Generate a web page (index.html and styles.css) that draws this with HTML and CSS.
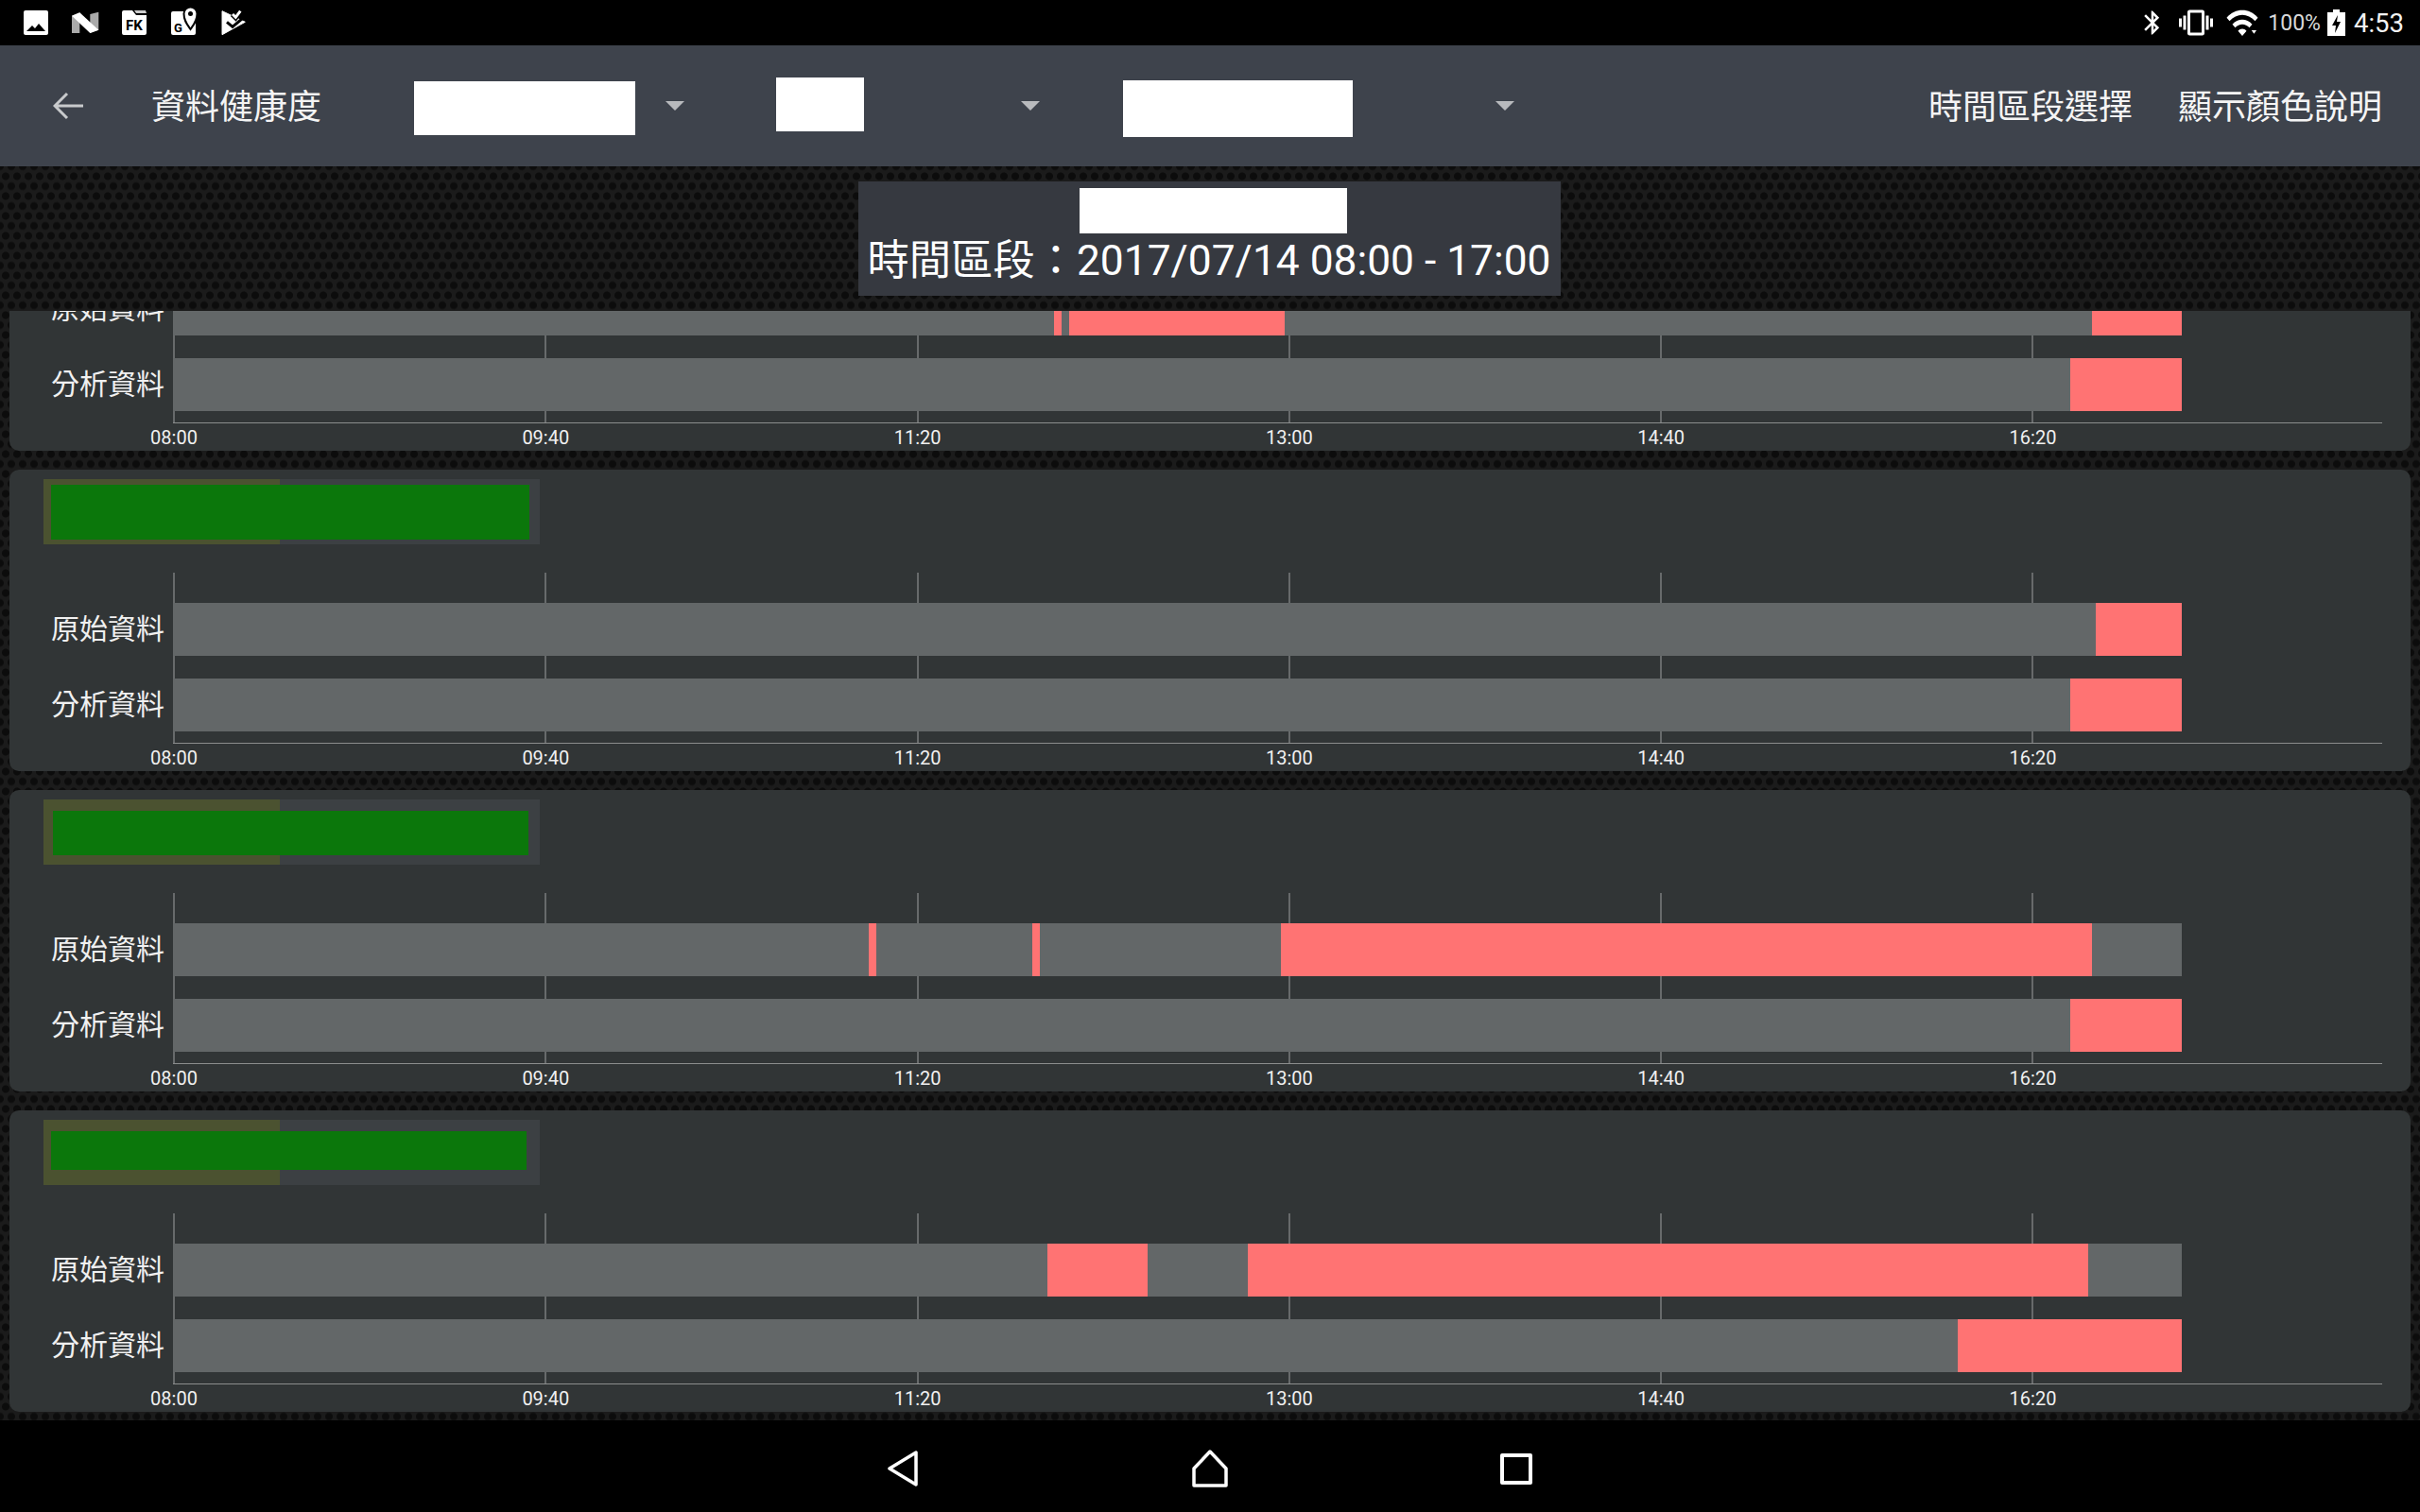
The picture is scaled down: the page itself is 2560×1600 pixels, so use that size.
FILE: index.html
```html
<!DOCTYPE html>
<html lang="zh-Hant">
<head>
    <meta charset="UTF-8">
    <title>資料健康度</title>
    <link rel="stylesheet" href="styles.css">
</head>
<body>
    <!-- Android status bar -->
    <div class="statusbar">
        <div class="status-left">
            <svg class="status-icon" viewBox="0 0 26 30"><rect x="0" y="4" width="26" height="26" rx="2" fill="#fff"/><path d="M3 26l6-6 3 3 4-5 7 8z" fill="#000"/></svg>
            <svg class="status-icon" viewBox="0 0 26 30"><path d="M-1 9.7L7.3 6.3V28H-1z" fill="#aaa"/><path d="M18.3 8l9-2.3v19L18.3 28z" fill="#aaa"/><path d="M-1 9.7L7.3 6.3l20 18.4-9 3.3z" fill="#fff"/></svg>
            <svg class="status-icon" viewBox="0 0 26 30"><path d="M2 4h9l4 5h11v19a2 2 0 0 1-2 2H2a2 2 0 0 1-2-2V6a2 2 0 0 1 2-2z" fill="#fff"/><path d="M13 4h12l1 3H15z" fill="#ccc"/><text class="icon-text" x="4" y="25" font-size="15">FK</text></svg>
            <svg class="status-icon" viewBox="0 0 26 30"><path d="M2 5h22a2 2 0 0 1 2 2v21a2 2 0 0 1-2 2H2a2 2 0 0 1-2-2V7a2 2 0 0 1 2-2z" fill="#fff"/><path d="M20.5 24C17 19 13.500 15 13.500 7.500a7 7 0 0 1 14 0C27.500 15 24 19 20.500 24z" fill="#fff" stroke="#000" stroke-width="2"/><circle cx="20.500" cy="7.500" r="2.500" fill="#000"/><text class="icon-text" x="3" y="27" font-size="13">G</text></svg>
            <svg class="status-icon" viewBox="0 0 26 30"><path d="M2 4.700L26.300 16.300 2 29.700z" fill="#fff" stroke="#fff" stroke-linejoin="round"/><path d="M7 16.300l6 5 10-8.300" fill="none" stroke="#000" stroke-width="3"/><path d="M13 8l3.300 3.300 5-6.600" fill="none" stroke="#000" stroke-width="6"/><path d="M13 8l3.300 3.300 5-6.600" fill="none" stroke="#fff" stroke-width="3"/></svg>
        </div>
        <div class="status-right">
            <svg class="icon-bt" viewBox="0 0 24 24"><path fill="#fff" d="M17.71 7.71L12 2h-1v7.59L6.41 5 5 6.41 10.59 12 5 17.59 6.41 19 11 14.41V22h1l5.71-5.71-4.3-4.29 4.3-4.29zM13 5.83l1.88 1.88L13 9.59V5.83zm1.88 10.46L13 18.17v-3.76l1.88 1.88z"/></svg>
            <svg class="icon-vibrate" viewBox="0 0 24 24"><path fill="#fff" d="M0 15h2V9H0v6zm3 2h2V7H3v10zm19-8v6h2V9h-2zm-3 8h2V7h-2v10zM16.500 3h-9C6.670 3 6 3.670 6 4.500v15c0 .83.67 1.500 1.500 1.500h9c.83 0 1.500-.67 1.500-1.500v-15c0-.83-.67-1.500-1.500-1.500zM16 19H8V5h8v14z"/></svg>
            <svg class="icon-wifi" viewBox="0 0 24 24" preserveAspectRatio="none"><path fill="#fff" d="M1 9l2 2c4.970-4.970 13.030-4.970 18 0l2-2C16.930 2.930 7.080 2.930 1 9zm8 8l3 3 3-3c-1.650-1.660-4.340-1.660-6 0zm-4-4l2 2c2.760-2.760 7.240-2.760 10 0l2-2C15.140 9.140 8.870 9.140 5 13z"/><path fill="#fff" d="M18.500 16.500h3.500l-1.750 2.200z"/></svg>
            <span class="battery-text">100%</span>
            <svg class="icon-battery" viewBox="0 0 19 28"><path fill="#fff" d="M6 0h7v3h6v25H0V3h6z"/><path fill="#000" d="M11 6l-6 11h4l-1 8 6-12h-4z"/></svg>
            <span class="clock">4:53</span>
        </div>
    </div>

    <!-- App bar -->
    <header class="appbar">
        <svg class="back" viewBox="0 0 32 30"><path d="M15 2L2 15l13 13M2 15h30" fill="none" stroke="#c8cacc" stroke-width="3"/></svg>
        <h1 class="title">資料健康度</h1>
        <div class="dropdown dd-one"><div class="redact"></div><span class="caret"></span></div>
        <div class="dropdown dd-two"><div class="redact"></div><span class="caret"></span></div>
        <div class="dropdown dd-three"><div class="redact"></div><span class="caret"></span></div>
        <div class="actions">
            <span>時間區段選擇</span>
            <span>顯示顏色說明</span>
        </div>
    </header>

    <main class="content">
        <div class="range-wrap">
            <div class="range-panel">
                <div class="range-name"></div>
                <div class="range-text">時間區段：2017/07/14 08:00 - 17:00</div>
            </div>
        </div>

        <div class="list">
            <!-- card 1, scrolled partly out of view -->
            <section class="card">
                <div class="card-title"><div class="mask mask-a"></div></div>
                <div class="chart">
                    <div class="labels"><div>原始資料</div><div>分析資料</div></div>
                    <div class="plot">
                        <div class="ticks"><i></i><i></i><i></i><i></i><i></i><i></i></div>
                        <div class="bar"><b class="ok" style="width:932px"></b><b class="bad" style="width:8px"></b><b class="ok" style="width:8px"></b><b class="bad" style="width:228px"></b><b class="ok" style="width:854px"></b><b class="bad" style="width:95px"></b></div>
                        <div class="bar"><b class="ok" style="width:2007px"></b><b class="bad" style="width:118px"></b></div>
                    </div>
                    <div class="times"><span>08:00</span><span>09:40</span><span>11:20</span><span>13:00</span><span>14:40</span><span>16:20</span></div>
                </div>
            </section>

            <section class="card">
                <div class="card-title"><div class="mask mask-a"></div></div>
                <div class="chart">
                    <div class="labels"><div>原始資料</div><div>分析資料</div></div>
                    <div class="plot">
                        <div class="ticks"><i></i><i></i><i></i><i></i><i></i><i></i></div>
                        <div class="bar"><b class="ok" style="width:2034px"></b><b class="bad" style="width:91px"></b></div>
                        <div class="bar"><b class="ok" style="width:2007px"></b><b class="bad" style="width:118px"></b></div>
                    </div>
                    <div class="times"><span>08:00</span><span>09:40</span><span>11:20</span><span>13:00</span><span>14:40</span><span>16:20</span></div>
                </div>
            </section>

            <section class="card">
                <div class="card-title"><div class="mask mask-b"></div></div>
                <div class="chart">
                    <div class="labels"><div>原始資料</div><div>分析資料</div></div>
                    <div class="plot">
                        <div class="ticks"><i></i><i></i><i></i><i></i><i></i><i></i></div>
                        <div class="bar"><b class="ok" style="width:736px"></b><b class="bad" style="width:8px"></b><b class="ok" style="width:165px"></b><b class="bad" style="width:8px"></b><b class="ok" style="width:255px"></b><b class="bad" style="width:858px"></b><b class="ok" style="width:95px"></b></div>
                        <div class="bar"><b class="ok" style="width:2007px"></b><b class="bad" style="width:118px"></b></div>
                    </div>
                    <div class="times"><span>08:00</span><span>09:40</span><span>11:20</span><span>13:00</span><span>14:40</span><span>16:20</span></div>
                </div>
            </section>

            <section class="card">
                <div class="card-title"><div class="mask mask-c"></div></div>
                <div class="chart">
                    <div class="labels"><div>原始資料</div><div>分析資料</div></div>
                    <div class="plot">
                        <div class="ticks"><i></i><i></i><i></i><i></i><i></i><i></i></div>
                        <div class="bar"><b class="ok" style="width:925px"></b><b class="bad" style="width:106px"></b><b class="ok" style="width:106px"></b><b class="bad" style="width:889px"></b><b class="ok" style="width:99px"></b></div>
                        <div class="bar"><b class="ok" style="width:1888px"></b><b class="bad" style="width:237px"></b></div>
                    </div>
                    <div class="times"><span>08:00</span><span>09:40</span><span>11:20</span><span>13:00</span><span>14:40</span><span>16:20</span></div>
                </div>
            </section>
        </div>
    </main>

    <!-- Android nav bar -->
    <nav class="navbar">
        <div class="nav-cell"><svg class="nav-back" viewBox="0 0 32 38"><path d="M30 2v34L2 19z" fill="none" stroke="#fff" stroke-width="3.500" stroke-linejoin="round"/></svg></div>
        <div class="nav-cell"><svg class="nav-home" viewBox="0 0 38 40"><path d="M19 2L36 20v18H2V20z" fill="none" stroke="#fff" stroke-width="3.500" stroke-linejoin="round"/></svg></div>
        <div class="nav-cell"><svg class="nav-recent" viewBox="0 0 34 33"><rect x="2" y="2" width="30" height="29" fill="none" stroke="#fff" stroke-width="4" stroke-linejoin="round"/></svg></div>
    </nav>
</body>
</html>
```

FILE: styles.css
```css
html, body {
    margin: 0;
    padding: 0;
}
body {
    width: 2560px;
    height: 1600px;
    overflow: hidden;
    display: flex;
    flex-direction: column;
    font-family: Roboto, "Noto Sans CJK TC", sans-serif;
    color: #fff;
    background: #000;
}

/* Status bar */
.statusbar {
    height: 48px;
    flex: none;
    display: flex;
    justify-content: space-between;
    background: #000;
}
.status-left {
    display: flex;
    gap: 26px;
    padding: 7px 0 0 25px;
}
.status-icon {
    width: 26px;
    height: 30px;
    overflow: visible;
}
.icon-text {
    font-family: Roboto, sans-serif;
    font-weight: 700;
    fill: #000;
}
.status-right {
    display: flex;
    align-items: center;
    padding-right: 17px;
}
.icon-bt {
    width: 30px;
    height: 30px;
}
.icon-vibrate {
    width: 36px;
    height: 36px;
    margin-left: 13px;
}
.icon-wifi {
    width: 36px;
    height: 42px;
    margin-left: 13px;
}
.battery-text {
    margin-left: 9px;
    font-size: 23px;
    color: #d8d8d8;
}
.icon-battery {
    width: 19px;
    height: 28px;
    margin-left: 7px;
}
.clock {
    margin-left: 9px;
    font-size: 27.5px;
    color: #f2f2f2;
}

/* App bar */
.appbar {
    height: 128px;
    flex: none;
    display: flex;
    align-items: center;
    padding-left: 56px;
    background: #3e434c;
}
.back {
    width: 32px;
    height: 30px;
    flex: none;
}
.title {
    margin: 0 0 5px 72px;
    width: 180px;
    font-size: 36px;
    font-weight: 400;
    white-space: nowrap;
    color: #f4f4f4;
}
.dropdown {
    display: flex;
    align-items: center;
}
.redact {
    background: #fff;
}
.caret {
    width: 0;
    height: 0;
    border-left: 10px solid transparent;
    border-right: 10px solid transparent;
    border-top: 10px solid #b8babd;
}
.dd-one {
    margin-left: 98px;
}
.dd-one .redact {
    width: 234px;
    height: 57px;
    margin-top: 5px;
}
.dd-one .caret {
    margin-left: 32px;
}
.dd-two {
    margin-left: 97px;
}
.dd-two .redact {
    width: 93px;
    height: 57px;
    margin-bottom: 3px;
}
.dd-two .caret {
    margin-left: 166px;
}
.dd-three {
    margin-left: 88px;
}
.dd-three .redact {
    width: 243px;
    height: 60px;
    margin-top: 6px;
}
.dd-three .caret {
    margin-left: 151px;
}
.actions {
    margin: 0 0 5px auto;
    display: flex;
    gap: 48px;
    padding-right: 40px;
    font-size: 36px;
    color: #f4f4f4;
}

/* Content */
.content {
    flex: 1;
    min-height: 0;
    display: flex;
    flex-direction: column;
    background-color: #1b1b1b;
    background-image: radial-gradient(circle, #0c0c0c 3.5px, transparent 4.5px), radial-gradient(circle, #0c0c0c 3.5px, transparent 4.5px);
    background-size: 12px 21px;
    background-position: 0 0, 6px 10.5px;
}
.range-wrap {
    height: 153px;
    flex: none;
    display: flex;
    justify-content: center;
    padding: 16px 2px 0 0;
    box-sizing: border-box;
}
.range-panel {
    width: 743px;
    height: 121px;
    padding-top: 7px;
    box-sizing: border-box;
    background: #363940;
}
.range-name {
    width: 283px;
    height: 48px;
    margin: 0 auto;
    background: #fff;
    transform: translateX(4px);
}
.range-text {
    height: 56px;
    line-height: 59px;
    font-size: 44.3px;
    text-align: center;
    white-space: nowrap;
}
.list {
    flex: 1;
    min-height: 0;
    overflow: hidden;
    padding: 0 10px;
}

/* Cards */
.card {
    width: 2540px;
    height: 319px;
    margin-bottom: 20px;
    padding-top: 10px;
    box-sizing: border-box;
    border-radius: 10px;
    background: #313536;
}
.card:first-child {
    margin-top: -171px;
}
.card-title {
    width: 525px;
    height: 69px;
    margin-left: 36px;
    display: flex;
    align-items: center;
    background: linear-gradient(to right, #4b5230 250px, #3c4043 250px);
}
.mask {
    background: #0b770b;
}
.mask-a {
    width: 506px;
    height: 58px;
    margin-left: 8px;
}
.mask-b {
    width: 503px;
    height: 47px;
    margin: 2px 0 0 10px;
}
.mask-c {
    width: 503px;
    height: 41px;
    margin: -4px 0 0 8px;
}

/* Chart */
.chart {
    display: grid;
    grid-template-columns: 173px 2337px;
    margin-top: 30px;
}
.labels {
    padding-top: 32px;
    padding-right: 9px;
    display: flex;
    flex-direction: column;
    gap: 24px;
    font-size: 30px;
    text-align: right;
    color: #f0f0f0;
}
.labels div {
    height: 56px;
    line-height: 56px;
}
.plot {
    position: relative;
    height: 181px;
    box-sizing: border-box;
    padding-top: 32px;
    border-bottom: 1px solid #8b8d8d;
    display: flex;
    flex-direction: column;
    gap: 24px;
}
.ticks {
    position: absolute;
    top: 0;
    bottom: 0;
    left: 0;
    display: flex;
}
.ticks i {
    width: 393.3px;
    box-sizing: border-box;
    border-left: 2px solid #676a6b;
}
.bar {
    position: relative;
    width: 2125px;
    height: 56px;
    display: flex;
}
.bar b {
    flex: none;
    display: block;
}
.ok {
    background: #636768;
}
.bad {
    background: #ff7373;
}
.times {
    grid-column: 2;
    display: flex;
    height: 29px;
    line-height: 30px;
    font-size: 20px;
    color: #f0f0f0;
}
.times span {
    width: 393.3px;
    flex: none;
    transform: translateX(calc(-50% + 1px));
    text-align: center;
}

/* Nav bar */
.navbar {
    height: 97px;
    flex: none;
    display: flex;
    justify-content: center;
    padding-top: 5px;
    box-sizing: border-box;
    background: #000;
}
.nav-cell {
    width: 324px;
    display: flex;
    align-items: center;
    justify-content: center;
}
.nav-back {
    width: 32px;
    height: 38px;
    margin-right: 2px;
}
.nav-home {
    width: 38px;
    height: 40px;
}
.nav-recent {
    width: 34px;
    height: 33px;
}
```
